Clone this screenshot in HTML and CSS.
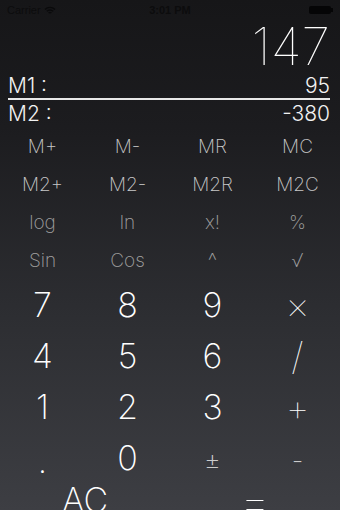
FILE: index.html
```html
<!DOCTYPE html>
<html>
<head>
<meta charset="utf-8">
<link rel="stylesheet" href="styles.css">
</head>
<body>
<div class="screen">
  <div class="status">
    <div class="carrier">Carrier <svg class="wifi" width="12" height="9" viewBox="0 0 12 9"><path d="M1 3.5 A7 7 0 0 1 11 3.5 M2.8 5.3 A4.5 4.5 0 0 1 9.2 5.3 M4.6 7.1 A2 2 0 0 1 7.4 7.1" fill="none" stroke="#0a0a0b" stroke-width="1.4"/></svg></div>
    <div class="time">3:01 PM</div>
    <div class="battery"><span class="batt-body"></span><span class="batt-tip"></span></div>
  </div>
  <div class="display">147</div>
  <div class="mem-row"><span>M1 :</span><span>95</span></div>
  <div class="divider"></div>
  <div class="mem-row m2"><span>M2 :</span><span>-380</span></div>
  <div class="keys small">
    <div class="key">M+</div><div class="key">M-</div><div class="key">MR</div><div class="key">MC</div>
    <div class="key">M2+</div><div class="key">M2-</div><div class="key">M2R</div><div class="key">M2C</div>
    <div class="key dim">log</div><div class="key dim">ln</div><div class="key dim">x!</div><div class="key dim">%</div>
    <div class="key dim">Sin</div><div class="key dim">Cos</div><div class="key dim caret">^</div><div class="key dim">√</div>
  </div>
  <div class="keys big">
    <div class="key">7</div><div class="key">8</div><div class="key">9</div><div class="key op">×</div>
    <div class="key">4</div><div class="key">5</div><div class="key">6</div><div class="key op">/</div>
    <div class="key">1</div><div class="key">2</div><div class="key">3</div><div class="key op">+</div>
    <div class="key low">.</div><div class="key">0</div><div class="key pm low">±</div><div class="key minus low">-</div>
  </div>
  <div class="keys last">
    <div class="key">AC</div><div class="key eq">=</div>
  </div>
</div>
</body>
</html>
```
FILE: styles.css
```css
html, body {
  margin: 0;
  padding: 0;
}
body {
  width: 340px;
  height: 510px;
  overflow: hidden;
  font-family: "Inter", "Roboto", "Liberation Sans", sans-serif;
  color: #fff;
}
.screen {
  width: 340px;
  height: 510px;
  overflow: hidden;
  background: linear-gradient(180deg, #161618 0%, #1c1c1f 25%, #2c2d31 60%, #3d3e43 100%);
}
.status {
  height: 20px;
  display: flex;
  align-items: center;
  justify-content: space-between;
  padding: 0 7px;
  font-size: 11px;
  color: #0c0c0d;
  font-family: "Liberation Sans", sans-serif;
}
.carrier {
  display: flex;
  align-items: center;
  gap: 3px;
  width: 100px;
}
.time {
  font-weight: bold;
}
.battery {
  width: 100px;
  display: flex;
  justify-content: flex-end;
  align-items: center;
}
.batt-body {
  width: 22px;
  height: 8px;
  background: #050506;
  border-radius: 2px;
}
.batt-tip {
  width: 2px;
  height: 4px;
  background: #050506;
}
.display {
  text-align: right;
  font-size: 52px;
  font-weight: 100;
  line-height: 54px;
  padding: 0 10px 0 0;
  height: 54px;
}
.mem-row {
  display: flex;
  justify-content: space-between;
  padding: 0 10px 0 8px;
  font-size: 21px;
  font-weight: 300;
  line-height: 24px;
  color: #f2f2f2;
  margin-top: 0;
}
.mem-row.m2 {
  margin-top: 2px;
}
.divider {
  height: 2px;
  background: #e8e8e8;
  margin: 0 10px 0 8px;
}
.keys {
  display: grid;
  grid-template-columns: repeat(4, 1fr);
}
.keys.small {
  margin-top: 1px;
  grid-auto-rows: 38px;
  font-size: 19px;
  font-weight: 200;
  color: #c8c8c8;
}
.key {
  display: flex;
  align-items: center;
  justify-content: center;
}
.key.dim {
  color: #a0a0a0;
}
.key.caret {
  font-size: 22px;
}
.keys.big {
  grid-auto-rows: 51px;
  font-size: 34px;
  font-weight: 200;
}
.key.op {
  font-size: 38px;
  font-weight: 100;
}
.key.low {
  padding-top: 6px;
}
.key.pm {
  font-size: 26px;
  color: #ccc;
}
.key.minus {
  color: #ccc;
  font-size: 26px;
}
.keys.last {
  grid-template-columns: 1fr 1fr;
  grid-auto-rows: 32px;
  font-size: 34px;
  font-weight: 200;
}
.key.eq {
  font-size: 50px;
  font-weight: 100;
  line-height: 32px;
  padding-top: 4px;
}
```
